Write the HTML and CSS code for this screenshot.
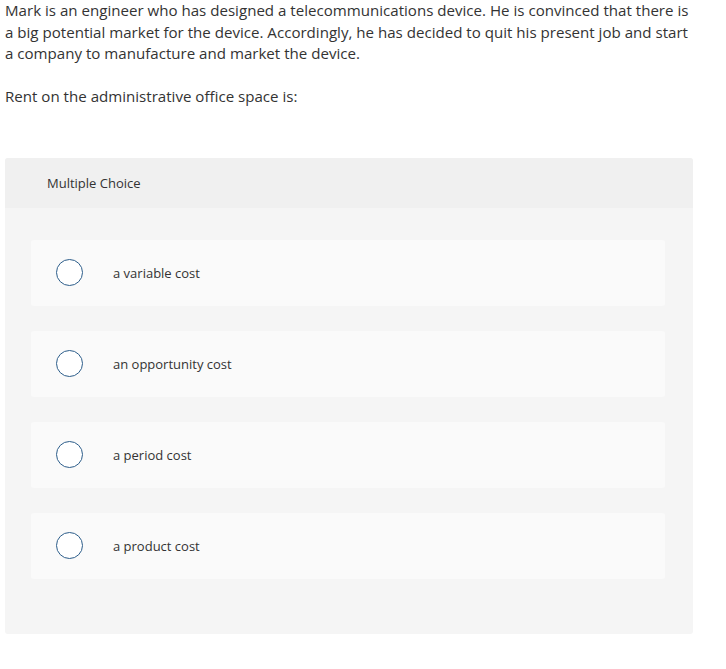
FILE: index.html
```html
<!DOCTYPE html>
<html>
<head>
<meta charset="utf-8">
<link rel="stylesheet" href="styles.css">
</head>
<body>
<div class="page">
  <p class="question">Mark is an engineer who has designed a telecommunications device. He is convinced that there is a big potential market for the device. Accordingly, he has decided to quit his present job and start a company to manufacture and market the device.</p>
  <p class="prompt">Rent on the administrative office space is:</p>
  <div class="mc">
    <div class="mc-head">Multiple Choice</div>
    <div class="mc-body">
      <div class="opt"><span class="radio"></span><span class="label">a variable cost</span></div>
      <div class="opt"><span class="radio"></span><span class="label">an opportunity cost</span></div>
      <div class="opt"><span class="radio"></span><span class="label">a period cost</span></div>
      <div class="opt"><span class="radio"></span><span class="label">a product cost</span></div>
    </div>
  </div>
</div>
</body>
</html>
```

FILE: styles.css
```css
html, body { margin: 0; padding: 0; background: #fff; }
body { font-family: "Open Sans", "Lato", sans-serif; color: #333; }
.page { padding: 0 5px; width: 688px; }
.question { margin: 0; font-size: 15.1px; line-height: 21.5px; padding-top: 0; max-width: 687px; }
.prompt { margin: 21px 0 0; font-size: 15.1px; line-height: 21px; }
.mc { margin-top: 51px; background: #f5f5f5; border-radius: 3px; overflow: hidden; padding-bottom: 55px; }
.mc-head { height: 50px; background: #f0f0f0; display: flex; align-items: center; padding-left: 42px; font-size: 13px; }
.mc-body { padding: 32px 28px 0 26px; display: flex; flex-direction: column; gap: 25px; }
.opt { height: 66px; background: #fafafa; border-radius: 3px; display: flex; align-items: center; padding-left: 25px; }
.radio { width: 25px; height: 25px; border: 1.5px solid #2c5d8a; border-radius: 50%; background: #fff; flex: none; }
.label { margin-left: 30px; font-size: 13px; }
```
